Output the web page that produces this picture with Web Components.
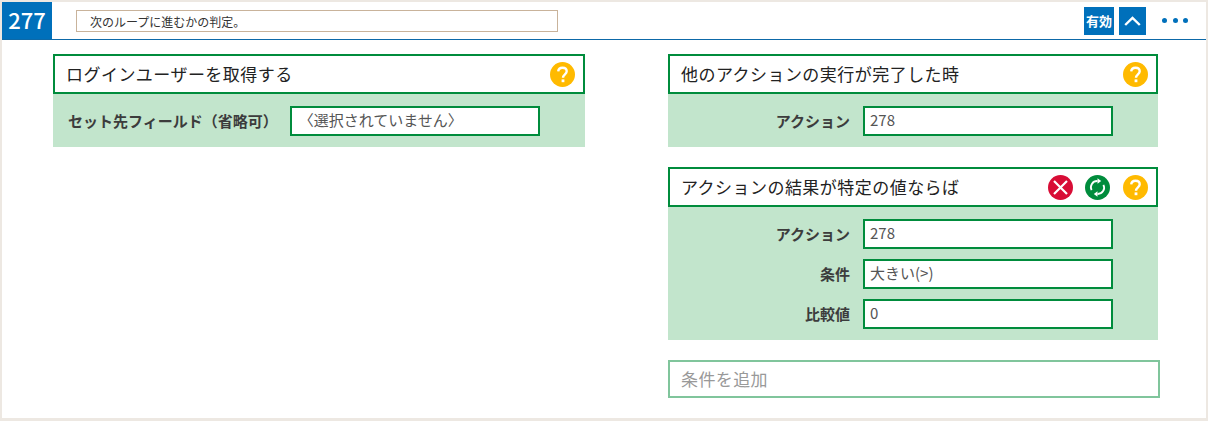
<!DOCTYPE html>
<html lang="ja">
<head>
<meta charset="utf-8">
<title>277</title>
<style>
  html, body { margin: 0; height: 100%; }
  body {
    background: #ede8e2;
    font-family: "Noto Sans CJK JP", "Noto Sans", sans-serif;
    color: #333;
  }
</style>
</head>
<body>
<rule-panel number="277" memo="次のループに進むかの判定。">
  <rule-column slot="left">
    <action-card title="ログインユーザーを取得する" icons="help">
      <field-row label="セット先フィールド（省略可）" value="〈選択されていません〉" wide></field-row>
    </action-card>
  </rule-column>
  <rule-column slot="right">
    <action-card title="他のアクションの実行が完了した時" icons="help">
      <field-row label="アクション" value="278"></field-row>
    </action-card>
    <action-card title="アクションの結果が特定の値ならば" icons="remove swap help">
      <field-row label="アクション" value="278"></field-row>
      <field-row label="条件" value="大きい(>)"></field-row>
      <field-row label="比較値" value="0"></field-row>
    </action-card>
    <add-condition>条件を追加</add-condition>
  </rule-column>
</rule-panel>

<script>
class RulePanel extends HTMLElement {
  constructor() {
    super();
    const shadow = this.attachShadow({mode: 'open'});
    shadow.innerHTML = `
      <style>
        :host {
          display: block;
          box-sizing: border-box;
          height: 416px;
          margin: 2px 2px 0;
          background: #fff;
        }
        header {
          display: flex;
          align-items: center;
          height: 38px;
          box-sizing: border-box;
          border-bottom: 1px solid #0d69a8;
        }
        .number {
          width: 50px;
          height: 37px;
          background: #0070bb;
          color: #fff;
          font-size: 22px;
          font-weight: 500;
          line-height: 35px;
          text-align: center;
        }
        .memo {
          box-sizing: border-box;
          width: 482px;
          height: 22px;
          margin-left: 24px;
          padding-left: 13px;
          border: 1px solid #c9b39b;
          font-size: 12px;
          line-height: 21px;
        }
        .tools {
          display: flex;
          align-items: center;
          margin-left: auto;
        }
        .btn {
          height: 28px;
          background: #0070bb;
          color: #fff;
          display: flex;
          align-items: center;
          justify-content: center;
        }
        .state { width: 30px; font-size: 13px; font-weight: 700; }
        .fold { width: 27px; margin-left: 5px; }
        .dots { display: flex; gap: 5.5px; margin: 0 18px 0 16px; }
        .dots i { width: 5px; height: 5px; border-radius: 50%; background: #0070bb; }
        main {
          display: grid;
          grid-template-columns: 532px 490px;
          column-gap: 83px;
          padding: 14px 0 0 51px;
        }
      </style>
      <header>
        <div class="number">${this.getAttribute('number')}</div>
        <div class="memo">${this.getAttribute('memo')}</div>
        <div class="tools">
          <div class="btn state">有効</div>
          <div class="btn fold">
            <svg width="17" height="10" viewBox="0 0 17 10" fill="none" stroke="#fff" stroke-width="2.4"><path d="M1.2 9 L8.5 2 L15.8 9"/></svg>
          </div>
          <div class="dots"><i></i><i></i><i></i></div>
        </div>
      </header>
      <main>
        <slot name="left"></slot>
        <slot name="right"></slot>
      </main>
    `;
  }
}
customElements.define('rule-panel', RulePanel);


class RuleColumn extends HTMLElement {
  constructor() {
    super();
    const shadow = this.attachShadow({mode: 'open'});
    shadow.innerHTML = `
      <style>
        :host { display: flex; flex-direction: column; gap: 20px; align-items: stretch; }
      </style>
      <slot></slot>
    `;
  }
}
customElements.define('rule-column', RuleColumn);


const ICONS = {
  help: `<svg width="25" height="25" viewBox="0 0 25 25"><circle cx="12.5" cy="12.5" r="12.5" fill="#ffba00"/><path d="M8.2 9.4 C8.4 6.9 10.1 5.7 12.5 5.7 C15 5.7 16.7 7.1 16.7 9.2 C16.7 12.2 13 12.4 13 15.8" fill="none" stroke="#fff" stroke-width="2.4"/><rect x="11.6" y="17.4" width="2.8" height="2.8" fill="#fff"/></svg>`,
  remove: `<svg width="25" height="25" viewBox="0 0 25 25"><circle cx="12.5" cy="12.5" r="12.5" fill="#d80d36"/><path d="M6 6 L19 19 M19 6 L6 19" stroke="#fff" stroke-width="2.2"/></svg>`,
  swap: `<svg width="25" height="25" viewBox="0 0 25 25"><circle cx="12.5" cy="12.5" r="12.5" fill="#008c3c"/><g fill="none" stroke="#fff" stroke-width="1.8"><path d="M6.6 15.2 A6.3 6.3 0 0 1 12.5 6"/><path d="M18.4 9.8 A6.3 6.3 0 0 1 12.5 19"/></g><path d="M12.5 3.2 L16.2 6 L12.5 8.8 Z M12.5 16.2 L8.8 19 L12.5 21.8 Z" fill="#fff"/></svg>`
};

class ActionCard extends HTMLElement {
  constructor() {
    super();
    const shadow = this.attachShadow({mode: 'open'});
    const icons = this.getAttribute('icons').split(' ').map(n => ICONS[n]).join('');
    shadow.innerHTML = `
      <style>
        :host { display: block; }
        .head {
          display: flex;
          align-items: center;
          box-sizing: border-box;
          height: 40px;
          padding: 0 8px 0 11px;
          border: 2px solid #008c3c;
          background: #fff;
        }
        h3 {
          margin: 0 0 2px;
          font-size: 17px;
          font-weight: 400;
          letter-spacing: .46px;
          color: #222;
        }
        .icons { display: flex; gap: 12px; margin-left: auto; }
        .icons svg { display: block; }
        .icons svg:last-child:not(:first-child) { margin-left: 1px; }
        .body {
          display: flex;
          flex-direction: column;
          gap: 10px;
          padding: 12px 0 11px;
          background: #c2e5cc;
        }
      </style>
      <div class="head">
        <h3>${this.getAttribute('title')}</h3>
        <div class="icons">${icons}</div>
      </div>
      <div class="body"><slot></slot></div>
    `;
  }
}
customElements.define('action-card', ActionCard);


class FieldRow extends HTMLElement {
  constructor() {
    super();
    const shadow = this.attachShadow({mode: 'open'});
    const wide = this.hasAttribute('wide');
    shadow.innerHTML = `
      <style>
        :host { display: block; }
        .row {
          display: flex;
          align-items: center;
          height: 30px;
        }
        label {
          width: ${wide ? 'auto' : '182px'};
          margin: 0 0 2px ${wide ? '15px' : '0'};
          text-align: right;
          font-size: 15px;
          font-weight: 700;
          color: #3c3c3c;
          white-space: nowrap;
        }
        .value {
          box-sizing: border-box;
          width: 250px;
          height: 30px;
          margin-left: ${wide ? '12px' : '13px'};
          padding-left: ${wide ? '7px' : '5px'};
          border: 2px solid #008c3c;
          background: #fff;
          font-size: 15px;
          line-height: 24px;
          color: #555;
        }
      </style>
      <div class="row">
        <label>${this.getAttribute('label')}</label>
        <div class="value">${this.getAttribute('value').replace('>', '&gt;')}</div>
      </div>
    `;
  }
}
customElements.define('field-row', FieldRow);


class AddCondition extends HTMLElement {
  constructor() {
    super();
    const shadow = this.attachShadow({mode: 'open'});
    shadow.innerHTML = `
      <style>
        :host {
          display: block;
          box-sizing: border-box;
          width: 492px;
          height: 38px;
          padding-left: 11px;
          border: 2px solid #80c59c;
          font-size: 17px;
          letter-spacing: .4px;
          line-height: 34px;
          color: #999;
        }
      </style>
      <slot></slot>
    `;
  }
}
customElements.define('add-condition', AddCondition);
</script>
</body>
</html>
